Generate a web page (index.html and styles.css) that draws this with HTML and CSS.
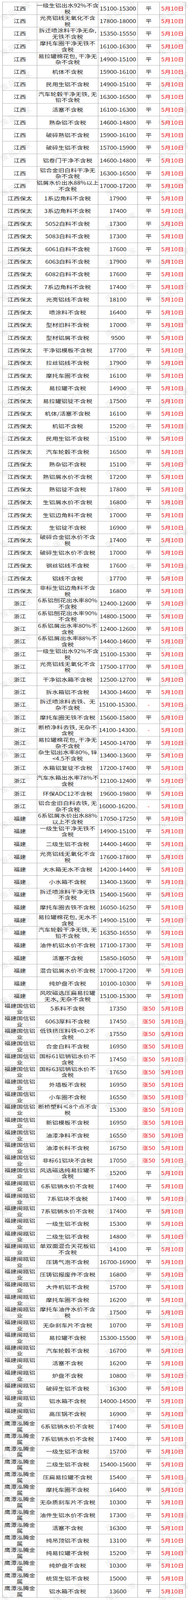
FILE: index.html
```html
<!DOCTYPE html>
<html lang="zh-CN">
<head>
<meta charset="utf-8">
<title>铝价行情</title>
<link rel="stylesheet" href="styles.css">
</head>
<body>
<div class="frame">
<div class="sheet">
<table class="prices">
<tbody>
<tr><td>江西</td><td><span>一级生铝出水92%不含<br>税</span></td><td>15100-15300</td><td>平</td><td>5月10日</td></tr>
<tr><td>江西</td><td><span>光亮铝线无氧化不含<br>税</span></td><td>17800-18000</td><td>平</td><td>5月10日</td></tr>
<tr><td>江西</td><td><span>拆迁喷涂料干净无杂,<br>无铁不含税</span></td><td>15350-15550</td><td>平</td><td>5月10日</td></tr>
<tr><td>江西</td><td><span>摩托车圈干净无铁不<br>含税</span></td><td>16100-16300</td><td>平</td><td>5月10日</td></tr>
<tr><td>江西</td><td><span>易拉罐棉花包, 干净无<br>杂不含税</span></td><td>14900-15100</td><td>平</td><td>5月10日</td></tr>
<tr><td>江西</td><td>机体不含税</td><td>15900-16100</td><td>平</td><td>5月10日</td></tr>
<tr><td>江西</td><td>民用生铝不含税</td><td>14900-15100</td><td>平</td><td>5月10日</td></tr>
<tr><td>江西</td><td><span>汽车轮毂干净无铁, 无<br>铅不含税</span></td><td>16300-16500</td><td>平</td><td>5月10日</td></tr>
<tr><td>江西</td><td>活塞不含税</td><td>16100-16300</td><td>平</td><td>5月10日</td></tr>
<tr><td>江西</td><td>熟杂铝不含税</td><td>14600-14800</td><td>平</td><td>5月10日</td></tr>
<tr><td>江西</td><td>破碎熟铝不含税</td><td>15900-16100</td><td>平</td><td>5月10日</td></tr>
<tr><td>江西</td><td>破碎生铝不含税</td><td>15700-15900</td><td>平</td><td>5月10日</td></tr>
<tr><td>江西</td><td>铝卷门干净不含税</td><td>14600-14800</td><td>平</td><td>5月10日</td></tr>
<tr><td>江西</td><td><span>铝合金旧白料干净无<br>杂不含税</span></td><td>16300-16500</td><td>平</td><td>5月10日</td></tr>
<tr><td>江西</td><td><span>铝屑水价出水88%以上<br>不含税</span></td><td>17000-17200</td><td>平</td><td>5月10日</td></tr>
<tr><td>江西保太</td><td>1系边角料不含税</td><td>17900</td><td>平</td><td>5月10日</td></tr>
<tr><td>江西保太</td><td>3系边角料不含税</td><td>17400</td><td>平</td><td>5月10日</td></tr>
<tr><td>江西保太</td><td>5052白料不含税</td><td>17300</td><td>平</td><td>5月10日</td></tr>
<tr><td>江西保太</td><td>5083白料不含税</td><td>17300</td><td>平</td><td>5月10日</td></tr>
<tr><td>江西保太</td><td>6061白料不含税</td><td>17600</td><td>平</td><td>5月10日</td></tr>
<tr><td>江西保太</td><td>6063白料不含税</td><td>17900</td><td>平</td><td>5月10日</td></tr>
<tr><td>江西保太</td><td>6082白料不含税</td><td>17600</td><td>平</td><td>5月10日</td></tr>
<tr><td>江西保太</td><td>7系边角料不含税</td><td>17400</td><td>平</td><td>5月10日</td></tr>
<tr><td>江西保太</td><td>光亮铝线不含税</td><td>18100</td><td>平</td><td>5月10日</td></tr>
<tr><td>江西保太</td><td>喷涂料不含税</td><td>16400</td><td>平</td><td>5月10日</td></tr>
<tr><td>江西保太</td><td>型材旧料不含税</td><td>17000</td><td>平</td><td>5月10日</td></tr>
<tr><td>江西保太</td><td>型材铝屑不含税</td><td>9500</td><td>平</td><td>5月10日</td></tr>
<tr><td>江西保太</td><td>干净铝模板不含税</td><td>17700</td><td>平</td><td>5月10日</td></tr>
<tr><td>江西保太</td><td>拉丝铝线不含税</td><td>17900</td><td>平</td><td>5月10日</td></tr>
<tr><td>江西保太</td><td>摩托车圈不含税</td><td>16100</td><td>平</td><td>5月10日</td></tr>
<tr><td>江西保太</td><td>易拉罐不含税</td><td>14900</td><td>平</td><td>5月10日</td></tr>
<tr><td>江西保太</td><td>易拉罐铝锭不含税</td><td>17500</td><td>平</td><td>5月10日</td></tr>
<tr><td>江西保太</td><td>机体/活塞不含税</td><td>16100</td><td>平</td><td>5月10日</td></tr>
<tr><td>江西保太</td><td>机铝不含税</td><td>15200</td><td>平</td><td>5月10日</td></tr>
<tr><td>江西保太</td><td>民用生铝不含税</td><td>15100</td><td>平</td><td>5月10日</td></tr>
<tr><td>江西保太</td><td>汽车轮毂不含税</td><td>16500</td><td>平</td><td>5月10日</td></tr>
<tr><td>江西保太</td><td>熟杂铝不含税</td><td>15100</td><td>平</td><td>5月10日</td></tr>
<tr><td>江西保太</td><td>熟铝屑水价不含税</td><td>17200</td><td>平</td><td>5月10日</td></tr>
<tr><td>江西保太</td><td>熟铝锭不含税</td><td>17800</td><td>平</td><td>5月10日</td></tr>
<tr><td>江西保太</td><td>生铝屑水价不含税</td><td>16800</td><td>平</td><td>5月10日</td></tr>
<tr><td>江西保太</td><td>生铝边角料不含税</td><td>17000</td><td>平</td><td>5月10日</td></tr>
<tr><td>江西保太</td><td>生铝锭不含税</td><td>16900</td><td>平</td><td>5月10日</td></tr>
<tr><td>江西保太</td><td><span>破碎合金铝水价不含<br>税</span></td><td>17400</td><td>平</td><td>5月10日</td></tr>
<tr><td>江西保太</td><td>破碎生铝水价不含税</td><td>17000</td><td>平</td><td>5月10日</td></tr>
<tr><td>江西保太</td><td>钢丝铝线不含税</td><td>17600</td><td>平</td><td>5月10日</td></tr>
<tr><td>江西保太</td><td>铝线不含税</td><td>17700</td><td>平</td><td>5月10日</td></tr>
<tr><td>江西保太</td><td><span>非标生铝边角料不含<br>税</span></td><td>16800</td><td>平</td><td>5月10日</td></tr>
<tr><td>浙江</td><td><span>6系铝刨花出水率80%<br>不含税</span></td><td>12400-12600</td><td>平</td><td>5月10日</td></tr>
<tr><td>浙江</td><td><span>6系铝刨花出水率90%<br>不含税</span></td><td>14800-15000</td><td>平</td><td>5月10日</td></tr>
<tr><td>浙江</td><td><span>6系铝屑出水率80%不<br>含税</span></td><td>12400-12600</td><td>平</td><td>5月10日</td></tr>
<tr><td>浙江</td><td><span>6系铝屑出水率88%不<br>含税</span></td><td>14400-14600</td><td>平</td><td>5月10日</td></tr>
<tr><td>浙江</td><td><span>一级生铝出水92%不含<br>税</span></td><td>15100-15300</td><td>平</td><td>5月10日</td></tr>
<tr><td>浙江</td><td><span>光亮铝线无氧化不含<br>税</span></td><td>17500-17700</td><td>平</td><td>5月10日</td></tr>
<tr><td>浙江</td><td>干净铝水箱不含税</td><td>12500-12700</td><td>平</td><td>5月10日</td></tr>
<tr><td>浙江</td><td>拆水箱铝不含税</td><td>14300-14600</td><td>平</td><td>5月10日</td></tr>
<tr><td>浙江</td><td><span>拆迁喷涂料去铁、无<br>杂不含税</span></td><td>15100-15300.</td><td class="up">-</td><td>5月10日</td></tr>
<tr><td>浙江</td><td>摩托车圈无铁不含税</td><td>15600-15800</td><td>平</td><td>5月10日</td></tr>
<tr><td>浙江</td><td><span>断桥净料去铁, 无杂不<br>含税</span></td><td>14100-14300.</td><td class="up">-</td><td>5月10日</td></tr>
<tr><td>浙江</td><td><span>易拉罐棉花包, 干净无<br>杂不含税</span></td><td>14500-14700</td><td>平</td><td>5月10日</td></tr>
<tr><td>浙江</td><td><span>杂生铝出水率80%, 锌<br>&lt;4.5不含税</span></td><td>13400-13600</td><td>平</td><td>5月10日</td></tr>
<tr><td>浙江</td><td>水箱铝复锭不含税</td><td>17200-17400</td><td>平</td><td>5月10日</td></tr>
<tr><td>浙江</td><td><span>汽车水箱出水率78%不<br>含税</span></td><td>12100-12400</td><td>平</td><td>5月10日</td></tr>
<tr><td>浙江</td><td>环保ADC12不含税</td><td>19600-19800</td><td>平</td><td>5月10日</td></tr>
<tr><td>浙江</td><td><span>铝合金旧白料去铁, 无<br>杂不含税</span></td><td>16000-16200.</td><td class="up">-</td><td>5月10日</td></tr>
<tr><td>福建</td><td><span>6系铝屑水价出水88%<br>以上不含税</span></td><td>17050-17250</td><td>平</td><td>5月10日</td></tr>
<tr><td>福建</td><td><span>一级生铝干净无铁不<br>含税</span></td><td>14900-15100</td><td>平</td><td>5月10日</td></tr>
<tr><td>福建</td><td>二级生铝不含税</td><td>14400-14600</td><td>平</td><td>5月10日</td></tr>
<tr><td>福建</td><td><span>光亮铝线无氧化不含<br>税</span></td><td>17600-17800</td><td>平</td><td>5月10日</td></tr>
<tr><td>福建</td><td>大水箱无水不含税</td><td>14200-14400</td><td>平</td><td>5月10日</td></tr>
<tr><td>福建</td><td>小水箱不含税</td><td>13400-13600</td><td>平</td><td>5月10日</td></tr>
<tr><td>福建</td><td><span>拆迁喷涂料干净无铁<br>不含税</span></td><td>15400-15600</td><td>平</td><td>5月10日</td></tr>
<tr><td>福建</td><td>摩托车圈去铁不含税</td><td>16050-16250</td><td>平</td><td>5月10日</td></tr>
<tr><td>福建</td><td><span>易拉罐棉花包, 无水不<br>含税</span></td><td>14900-15100</td><td>平</td><td>5月10日</td></tr>
<tr><td>福建</td><td><span>汽车轮毂干净无铁, 无<br>铅不含税</span></td><td>16350-16550</td><td>平</td><td>5月10日</td></tr>
<tr><td>福建</td><td>油件机铝水价不含税</td><td>17100-17300</td><td>平</td><td>5月10日</td></tr>
<tr><td>福建</td><td>活塞不含税</td><td>15850-16050</td><td>平</td><td>5月10日</td></tr>
<tr><td>福建</td><td>混合铝屑水价不含税</td><td>17000-17200</td><td>平</td><td>5月10日</td></tr>
<tr><td>福建</td><td>纯炉盘不含税</td><td>10100-10300</td><td>平</td><td>5月10日</td></tr>
<tr><td>福建</td><td><span>风吹磁选压扁易拉罐<br>无水, 无杂不含税</span></td><td>15100-15300</td><td>平</td><td>5月10日</td></tr>
<tr><td><span>福建国信铝<br>业</span></td><td>5系料不含税</td><td>17350</td><td class="up">涨50</td><td>5月10日</td></tr>
<tr><td><span>福建国信铝<br>业</span></td><td>6063厚料不含税</td><td>17450</td><td class="up">涨50</td><td>5月10日</td></tr>
<tr><td><span>福建国信铝<br>业</span></td><td><span>低铁挤压料铁&lt;0.2不<br>含税</span></td><td>17550</td><td class="up">涨50</td><td>5月10日</td></tr>
<tr><td><span>福建国信铝<br>业</span></td><td>合金白料不含税</td><td>16950</td><td class="up">涨50</td><td>5月10日</td></tr>
<tr><td><span>福建国信铝<br>业</span></td><td><span>国标61铝销铝水价不<br>含税</span></td><td>17450</td><td class="up">涨50</td><td>5月10日</td></tr>
<tr><td><span>福建国信铝<br>业</span></td><td><span>国标63铝销铝水价不<br>含税</span></td><td>17650</td><td class="up">涨50</td><td>5月10日</td></tr>
<tr><td><span>福建国信铝<br>业</span></td><td>外墙板不含税</td><td>16950</td><td class="up">涨50</td><td>5月10日</td></tr>
<tr><td><span>福建国信铝<br>业</span></td><td>小车圈不含税</td><td>16550</td><td class="up">涨50</td><td>5月10日</td></tr>
<tr><td><span>福建国信铝<br>业</span></td><td><span>断桥塑料≤8个点不含<br>税</span></td><td>15300</td><td class="up">涨50</td><td>5月10日</td></tr>
<tr><td><span>福建国信铝<br>业</span></td><td>新铝模板不含税</td><td>16950</td><td class="up">涨50</td><td>5月10日</td></tr>
<tr><td><span>福建国信铝<br>业</span></td><td>油漆净料不含税</td><td>16550</td><td class="up">涨50</td><td>5月10日</td></tr>
<tr><td><span>福建国信铝<br>业</span></td><td>油漆长料不含税</td><td>16750</td><td class="up">涨50</td><td>5月10日</td></tr>
<tr><td><span>福建国信铝<br>业</span></td><td>非标61铝块不含税</td><td>17050</td><td class="up">涨50</td><td>5月10日</td></tr>
<tr><td><span>福建国信铝<br>业</span></td><td><span>风选磁选纯易拉罐不<br>含税</span></td><td>15200</td><td>平</td><td>5月10日</td></tr>
<tr><td><span>福建闽瓯铝<br>业</span></td><td>6系铝销水价不含税</td><td>17400</td><td>平</td><td>5月10日</td></tr>
<tr><td><span>福建闽瓯铝<br>业</span></td><td>7系铝块不含税</td><td>17400</td><td>平</td><td>5月10日</td></tr>
<tr><td><span>福建闽瓯铝<br>业</span></td><td>7系铝销水价不含税</td><td>17400</td><td>平</td><td>5月10日</td></tr>
<tr><td><span>福建闽瓯铝<br>业</span></td><td>一级生铝不含税</td><td>15300</td><td>平</td><td>5月10日</td></tr>
<tr><td><span>福建闽瓯铝<br>业</span></td><td>二级生铝不含税</td><td>14800</td><td>平</td><td>5月10日</td></tr>
<tr><td><span>福建闽瓯铝<br>业</span></td><td><span>单双面混合天花板铝<br>不含税</span></td><td>14100</td><td>平</td><td>5月10日</td></tr>
<tr><td><span>福建闽瓯铝<br>业</span></td><td>压铸气泡不含税</td><td>16700-16900</td><td>平</td><td>5月10日</td></tr>
<tr><td><span>福建闽瓯铝<br>业</span></td><td>压铸铝报废件不含税</td><td>16800</td><td>平</td><td>5月10日</td></tr>
<tr><td><span>福建闽瓯铝<br>业</span></td><td>大件机铝不含税</td><td>15700</td><td>平</td><td>5月10日</td></tr>
<tr><td><span>福建闽瓯铝<br>业</span></td><td>摩托车圈不含税</td><td>16200</td><td>平</td><td>5月10日</td></tr>
<tr><td><span>福建闽瓯铝<br>业</span></td><td><span>摩托车油件水价不含<br>税</span></td><td>17500</td><td>平</td><td>5月10日</td></tr>
<tr><td><span>福建闽瓯铝<br>业</span></td><td>无杂刹车片不含税</td><td>10700</td><td>平</td><td>5月10日</td></tr>
<tr><td><span>福建闽瓯铝<br>业</span></td><td>易拉罐不含税</td><td>15300-15500</td><td>平</td><td>5月10日</td></tr>
<tr><td><span>福建闽瓯铝<br>业</span></td><td>汽车轮毂不含税</td><td>16700</td><td>平</td><td>5月10日</td></tr>
<tr><td><span>福建闽瓯铝<br>业</span></td><td>活塞不含税</td><td>16200</td><td>平</td><td>5月10日</td></tr>
<tr><td><span>福建闽瓯铝<br>业</span></td><td>炉盘不含税</td><td>10800</td><td>平</td><td>5月10日</td></tr>
<tr><td><span>福建闽瓯铝<br>业</span></td><td>破碎生铝不含税</td><td>16300</td><td>平</td><td>5月10日</td></tr>
<tr><td><span>福建闽瓯铝<br>业</span></td><td>铝水箱不含税</td><td>14000-14500</td><td>平</td><td>5月10日</td></tr>
<tr><td><span>福建闽瓯铝<br>业</span></td><td>高压锅不含税</td><td>16900</td><td>平</td><td>5月10日</td></tr>
<tr><td><span>鹰潭泓腾金<br>属</span></td><td>6系铝销水价不含税</td><td>17400</td><td>平</td><td>5月10日</td></tr>
<tr><td><span>鹰潭泓腾金<br>属</span></td><td>7系铝销水价不含税</td><td>17400</td><td>平</td><td>5月10日</td></tr>
<tr><td><span>鹰潭泓腾金<br>属</span></td><td>一级生铝不含税</td><td>15700</td><td>平</td><td>5月10日</td></tr>
<tr><td><span>鹰潭泓腾金<br>属</span></td><td>二级生铝不含税</td><td>15400-15600</td><td>平</td><td>5月10日</td></tr>
<tr><td><span>鹰潭泓腾金<br>属</span></td><td>压扁易拉罐不含税</td><td>15400</td><td>平</td><td>5月10日</td></tr>
<tr><td><span>鹰潭泓腾金<br>属</span></td><td>摩托车圈不含税</td><td>16400</td><td>平</td><td>5月10日</td></tr>
<tr><td><span>鹰潭泓腾金<br>属</span></td><td>无杂质刹车片不含税</td><td>10300</td><td>平</td><td>5月10日</td></tr>
<tr><td><span>鹰潭泓腾金<br>属</span></td><td>油件生铝水价不含税</td><td>17300</td><td>平</td><td>5月10日</td></tr>
<tr><td><span>鹰潭泓腾金<br>属</span></td><td>活塞不含税</td><td>16300</td><td>平</td><td>5月10日</td></tr>
<tr><td><span>鹰潭泓腾金<br>属</span></td><td>纯吊顶铝不含税</td><td>13100</td><td>平</td><td>5月10日</td></tr>
<tr><td><span>鹰潭泓腾金<br>属</span></td><td>纯易拉罐不含税</td><td>15200</td><td>平</td><td>5月10日</td></tr>
<tr><td><span>鹰潭泓腾金<br>属</span></td><td>纯炉盘不含税</td><td>10300</td><td>平</td><td>5月10日</td></tr>
<tr><td><span>鹰潭泓腾金<br>属</span></td><td>统货生铝不含税</td><td>15000</td><td>平</td><td>5月10日</td></tr>
<tr><td><span>鹰潭泓腾金<br>属</span></td><td>铝水箱不含税</td><td>13600</td><td>平</td><td>5月10日</td></tr>
</tbody>
</table>
<div class="watermarks" id="wm" aria-hidden="true"></div>
</div>
</div>
<script src="script.js"></script>
</body>
</html>
```

FILE: styles.css
```css
* { box-sizing: border-box; }

html, body {
  margin: 0;
  background: #fff;
}

body {
  font-family: "Noto Sans CJK SC", "Noto Sans", sans-serif;
}

.frame {
  width: 480px;
  height: 4096px;
  overflow: hidden;
}

.sheet {
  position: relative;
  width: 480px;
  height: 5205px;
  padding: 6px 0 0 6px;
  transform: scaleY(0.786936);
  transform-origin: 0 0;
}

.prices {
  display: grid;
  grid-template-columns: 88px 156px 101px 56px 66px;
  grid-auto-rows: 41.2px;
  width: 468px;
  border-left: 1px solid #a3a3a3;
  border-top: 1px solid #a3a3a3;
  font-size: 15.8px;
  line-height: 20px;
  color: #262626;
}

.prices tbody,
.prices tr {
  display: contents;
}

.prices td {
  display: flex;
  align-items: center;
  justify-content: center;
  padding: 2px 0 0;
  border-right: 1px solid #a3a3a3;
  border-bottom: 1px solid #a3a3a3;
  text-align: center;
  white-space: nowrap;
}

.prices td > span {
  display: block;
}

.prices td:nth-child(5),
.prices td.up {
  color: #e8141c;
}

.watermarks {
  position: absolute;
  inset: 0;
  overflow: hidden;
  pointer-events: none;
}

.watermarks span {
  position: absolute;
  transform: translate(-50%, -50%) rotate(-33deg);
  font-family: "Noto Sans CJK SC", sans-serif;
  font-size: 22px;
  letter-spacing: 1px;
  white-space: nowrap;
  color: rgba(0, 0, 0, 0.1);
}
```

FILE: script.js
```js
(function () {
  var wm = document.getElementById('wm');
  var xs = [40, 174, 308, 443];
  for (var k = 0; k < 46; k++) {
    var cy = 33.5 + k * 114.3;
    for (var i = 0; i < xs.length; i++) {
      var s = document.createElement('span');
      s.textContent = '废品之家';
      s.style.left = xs[i] + 'px';
      s.style.top = cy + 'px';
      wm.appendChild(s);
    }
  }
})();
```
